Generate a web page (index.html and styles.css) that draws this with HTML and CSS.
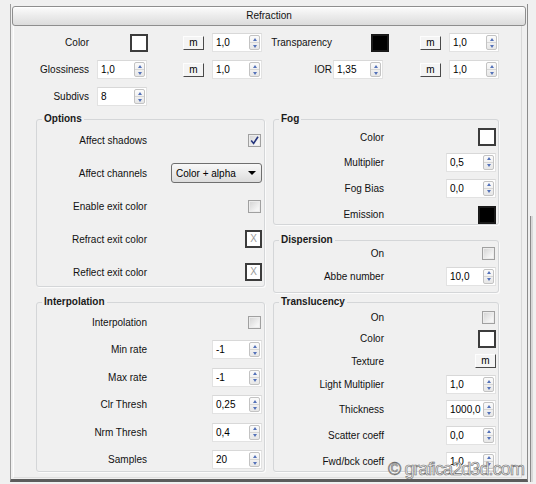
FILE: index.html
```html
<!DOCTYPE html>
<html>
<head>
<meta charset="utf-8">
<title>Refraction</title>
<link rel="stylesheet" href="styles.css">
</head>
<body>
<div class="screen">
  <div class="frame">
    <div class="rollout-head">Refraction</div>
    <div class="rollout-body">
      <div class="top-grid">
        <span class="lbl c1">Color</span>
        <span class="swatch white end"></span>
        <span class="mbtn end m1">m</span>
        <span class="spin end"><span class="val">1,0</span><span class="arr"><i class="up"></i><i class="dn"></i></span></span>
        <span class="lbl c5">Transparency</span>
        <span class="swatch black end"></span>
        <span class="mbtn end m1">m</span>
        <span class="spin end"><span class="val">1,0</span><span class="arr"><i class="up"></i><i class="dn"></i></span></span>

        <span class="lbl c1">Glossiness</span>
        <span class="spin start s1"><span class="val">1,0</span><span class="arr"><i class="up"></i><i class="dn"></i></span></span>
        <span class="mbtn end m1">m</span>
        <span class="spin end"><span class="val">1,0</span><span class="arr"><i class="up"></i><i class="dn"></i></span></span>
        <span class="lbl c5">IOR</span>
        <span class="spin start"><span class="val">1,35</span><span class="arr"><i class="up"></i><i class="dn"></i></span></span>
        <span class="mbtn end m1">m</span>
        <span class="spin end"><span class="val">1,0</span><span class="arr"><i class="up"></i><i class="dn"></i></span></span>

        <span class="lbl c1">Subdivs</span>
        <span class="spin start s1"><span class="val">8</span><span class="arr"><i class="up"></i><i class="dn"></i></span></span>
      </div>

      <div class="groups">
        <fieldset class="group">
          <legend>Options</legend>
          <div class="rows r-options">
            <span class="lbl">Affect shadows</span>
            <span class="chk checked"><svg width="11" height="11" viewBox="0 0 11 11"><path d="M2.2 5.6 L4.6 8.4 L9 1.8" fill="none" stroke="#24347c" stroke-width="1.6"/></svg></span>
            <span class="lbl">Affect channels</span>
            <span class="combo">Color + alpha</span>
            <span class="lbl">Enable exit color</span>
            <span class="chk"></span>
            <span class="lbl">Refract exit color</span>
            <span class="xsw">X</span>
            <span class="lbl">Reflect exit color</span>
            <span class="xsw">X</span>
          </div>
        </fieldset>

        <div class="stack">
          <fieldset class="group fog">
            <legend>Fog</legend>
            <div class="rows r-fog">
              <span class="lbl">Color</span>
              <span class="swatch white"></span>
              <span class="lbl">Multiplier</span>
              <span class="spin"><span class="val">0,5</span><span class="arr"><i class="up"></i><i class="dn"></i></span></span>
              <span class="lbl">Fog Bias</span>
              <span class="spin"><span class="val">0,0</span><span class="arr"><i class="up"></i><i class="dn"></i></span></span>
              <span class="lbl">Emission</span>
              <span class="swatch black"></span>
            </div>
          </fieldset>
          <fieldset class="group disp">
            <legend>Dispersion</legend>
            <div class="rows r-disp">
              <span class="lbl">On</span>
              <span class="chk"></span>
              <span class="lbl">Abbe number</span>
              <span class="spin"><span class="val">10,0</span><span class="arr"><i class="up"></i><i class="dn"></i></span></span>
            </div>
          </fieldset>
        </div>

        <fieldset class="group">
          <legend>Interpolation</legend>
          <div class="rows r-interp">
            <span class="lbl">Interpolation</span>
            <span class="chk"></span>
            <span class="lbl">Min rate</span>
            <span class="spin"><span class="val">-1</span><span class="arr"><i class="up"></i><i class="dn"></i></span></span>
            <span class="lbl">Max rate</span>
            <span class="spin"><span class="val">-1</span><span class="arr"><i class="up"></i><i class="dn"></i></span></span>
            <span class="lbl">Clr Thresh</span>
            <span class="spin"><span class="val">0,25</span><span class="arr"><i class="up"></i><i class="dn"></i></span></span>
            <span class="lbl">Nrm Thresh</span>
            <span class="spin"><span class="val">0,4</span><span class="arr"><i class="up"></i><i class="dn"></i></span></span>
            <span class="lbl">Samples</span>
            <span class="spin"><span class="val">20</span><span class="arr"><i class="up"></i><i class="dn"></i></span></span>
          </div>
        </fieldset>

        <fieldset class="group">
          <legend>Translucency</legend>
          <div class="rows r-transl">
            <span class="lbl">On</span>
            <span class="chk"></span>
            <span class="lbl">Color</span>
            <span class="swatch white"></span>
            <span class="lbl">Texture</span>
            <span class="mbtn">m</span>
            <span class="lbl">Light Multiplier</span>
            <span class="spin"><span class="val">1,0</span><span class="arr"><i class="up"></i><i class="dn"></i></span></span>
            <span class="lbl">Thickness</span>
            <span class="spin"><span class="val">1000,0</span><span class="arr"><i class="up"></i><i class="dn"></i></span></span>
            <span class="lbl">Scatter coeff</span>
            <span class="spin"><span class="val">0,0</span><span class="arr"><i class="up"></i><i class="dn"></i></span></span>
            <span class="lbl">Fwd/bck coeff</span>
            <span class="spin"><span class="val">1,0</span><span class="arr"><i class="up"></i><i class="dn"></i></span></span>
          </div>
        </fieldset>
      </div>
    </div>
  </div>
  <div class="scroll"><div class="thumb"></div></div>
</div>
<div class="watermark">© grafica2d3d.com</div>
</body>
</html>
```

FILE: styles.css
```css
* { box-sizing: border-box; }
html, body { margin: 0; padding: 0; }
body {
  width: 536px;
  height: 484px;
  overflow: hidden;
  position: relative;
  background: #f0f0f0;
  font-family: "Liberation Sans", Arial, sans-serif;
  font-size: 10px;
  color: #111;
}

.screen { display: flex; align-items: flex-start; }

.frame {
  margin: 4px 0 0 10px;
  width: 518px;
  height: 478px;
  border-left: 1px solid #9d9d9d;
  border-right: 1px solid #8c8c8c;
  border-bottom: 3px solid #5c5c5c;
  display: flex;
  flex-direction: column;
}

.rollout-head {
  margin: 2px 1px 0 1px;
  height: 20px;
  flex: none;
  border: 1px solid #8e8e8e;
  border-radius: 3px;
  background: linear-gradient(#fcfcfc, #ededed 45%, #dcdcdc);
  box-shadow: inset 0 1px 0 #fff;
  text-align: center;
  line-height: 18px;
  color: #111;
}

.rollout-body {
  flex: 1;
  margin: 0 5px 1px 2px;
  border-left: 1px solid #fdfdfd;
  border-right: 1px solid #d9d9d9;
  border-bottom: 1px solid #dedede;
}

/* top parameter grid */
.top-grid {
  display: grid;
  grid-template-columns: 82px 52px 57px 57px 71px 56px 53px 57px;
  grid-template-rows: repeat(3, 19px);
  row-gap: 8px;
  padding-top: 7px;
  align-items: center;
}
.top-grid .c1 { justify-self: end; padding-right: 7px; }
.top-grid .c5 { justify-self: end; padding-right: 1px; }
.top-grid .end { justify-self: end; }
.top-grid .start { justify-self: start; }
.top-grid .m1 { margin-right: 1px; }
.top-grid .s1 { margin-left: 1px; }

/* groups */
.groups {
  display: grid;
  grid-template-columns: 229px 226px;
  grid-template-rows: 174px 176px;
  column-gap: 8px;
  row-gap: 9px;
  margin: 7px 0 0 22px;
}
.stack { display: flex; flex-direction: column; gap: 9px; }
.fog { height: 112px; flex: none; }
.disp { flex: 1; }

fieldset.group {
  margin: 0;
  padding: 0 2px 0 0;
  min-width: 0;
  border: 1px solid #d4d6d8;
  border-radius: 3px;
  box-shadow: 1px 1px 0 #fbfbfb;
}
fieldset.group legend {
  margin-left: 5px;
  padding: 0 2px;
  font-weight: bold;
  line-height: 12px;
  color: #1a1a1a;
}

.rows {
  display: grid;
  grid-template-columns: 110px 1fr;
  align-items: center;
}
.rows > :nth-child(odd) { justify-self: end; }
.rows > :nth-child(even) { justify-self: end; }

.r-options { grid-template-rows: 31.5px repeat(4, 33px); }
.r-fog { grid-template-rows: 24.5px 25.5px 26.5px 26.5px; }
.r-disp { grid-template-rows: 14px 32px; }
.r-interp { grid-template-rows: 28px repeat(5, 27.5px); }
.r-transl { grid-template-rows: 19.5px 22px 23px 24.5px 25.5px 25.5px 26px; }

.lbl { color: #111; white-space: nowrap; }

/* spinner */
.spin {
  display: flex;
  width: 50px;
  height: 19px;
  background: #fff;
  border: 1px solid #e2e2e2;
  border-top-color: #d8d8d8;
}
.spin .val {
  flex: 1;
  padding-left: 3px;
  line-height: 17px;
  color: #000;
  white-space: nowrap;
}
.spin .arr {
  width: 11px;
  margin: 1px 1px 1px 0;
  border: 1px solid #c3c3c3;
  border-radius: 2px;
  background: linear-gradient(#fbfbfb, #e7e7e7);
  display: flex;
  flex-direction: column;
}
.spin .arr i {
  flex: 1;
  display: flex;
  align-items: center;
  justify-content: center;
}
.spin .arr i + i { border-top: 1px solid #d6d6d6; }
.spin .arr i::before {
  content: "";
  border-left: 2.5px solid transparent;
  border-right: 2.5px solid transparent;
}
.spin .arr .up::before { border-bottom: 3px solid #5472b8; }
.spin .arr .dn::before { border-top: 3px solid #5472b8; }

/* map button */
.mbtn {
  display: block;
  width: 21px;
  height: 14px;
  background: #f4f4f4;
  border: 1px solid;
  border-color: #fdfdfd #4a4a4a #4a4a4a #fdfdfd;
  text-align: center;
  line-height: 11px;
  color: #000;
}

/* colour swatches */
.swatch {
  display: block;
  width: 18px;
  height: 18px;
  border: 2px solid #3c3c3c;
  background: #fff;
}
.swatch.black { background: #000; border-color: #1a1a1a; }

.xsw {
  display: block;
  width: 17px;
  height: 18px;
  border: 2px solid #3c3c3c;
  background: #fff;
  color: #9a9a9a;
  font-size: 10px;
  text-align: center;
  line-height: 14px;
}

/* checkbox */
.chk {
  display: block;
  width: 13px;
  height: 13px;
  border: 1px solid #a0a0a0;
  background: linear-gradient(135deg, #d2d2d2, #f5f5f5 75%);
  box-shadow: inset 0 0 0 1px #ececec;
  margin-right: 1px;
}
.chk svg { display: block; }

/* dropdown */
.combo {
  display: flex;
  align-items: center;
  justify-content: space-between;
  width: 91px;
  height: 20px;
  padding: 0 5px 0 4px;
  border: 1px solid #6f6f6f;
  border-radius: 3px;
  background: linear-gradient(#f8f8f8, #ebebeb 50%, #dcdcdc);
  color: #000;
}
.combo::after {
  content: "";
  border-left: 4px solid transparent;
  border-right: 4px solid transparent;
  border-top: 4px solid #000;
}

/* scrollbar sliver */
.scroll { width: 8px; height: 482px; }
.thumb {
  margin: 216px 0 0 2px;
  width: 3px;
  height: 266px;
  border-left: 1px solid #8a8a8a;
  background: #d8d8d8;
}

/* watermark overlay */
.watermark {
  position: absolute;
  right: 12px;
  top: 460px;
  font-family: "Liberation Sans", Arial, sans-serif;
  font-size: 18px;
  line-height: 18px;
  letter-spacing: -0.9px;
  color: #f2f2f2;
  -webkit-text-stroke: 0.6px #6e6e6e;
  white-space: nowrap;
}
```
